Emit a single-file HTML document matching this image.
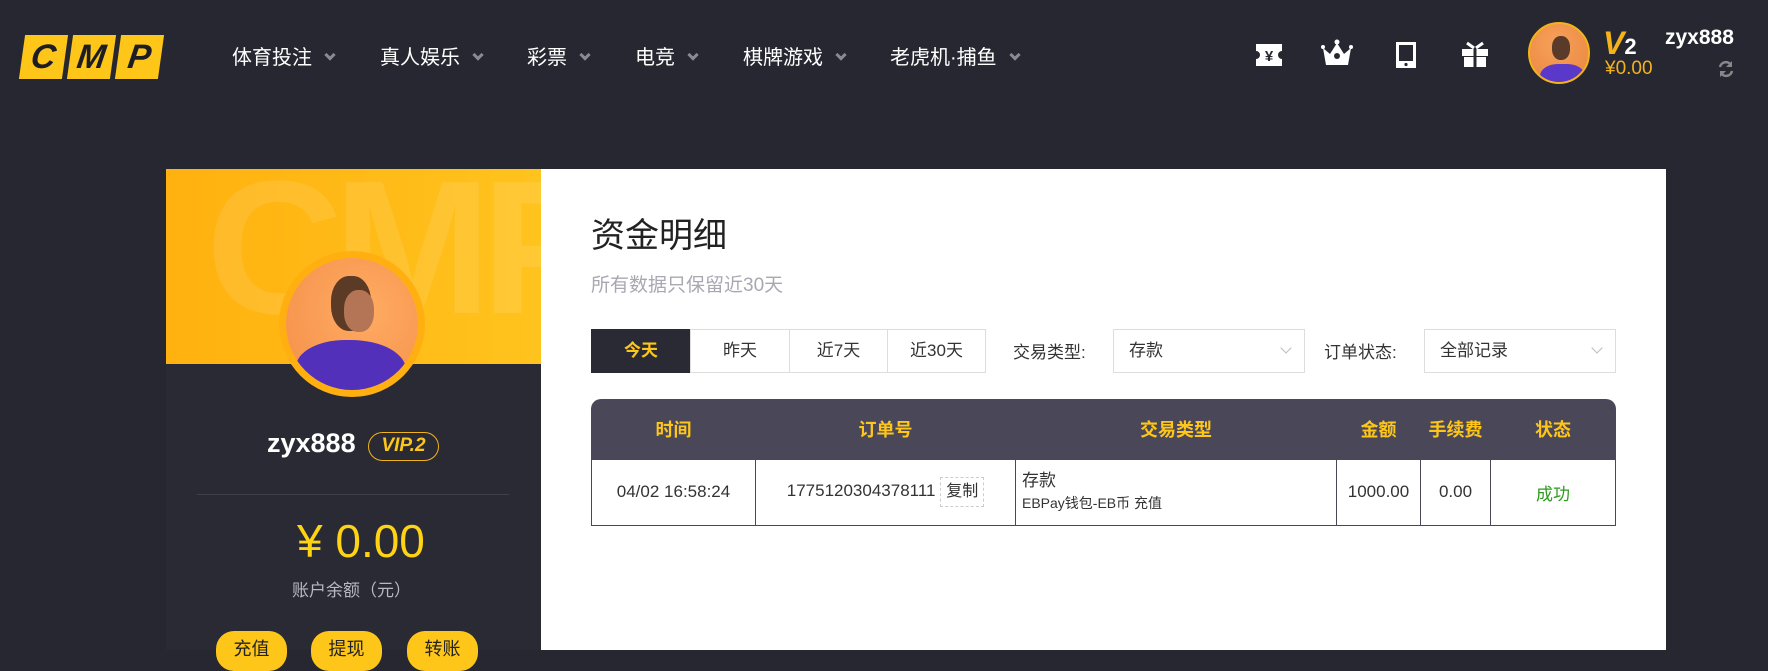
<!DOCTYPE html>
<html><head><meta charset="utf-8"><style>
*{margin:0;padding:0;box-sizing:border-box}
body{width:1768px;height:650px;overflow:hidden;background:#272731;font-family:"Liberation Sans","Noto Sans CJK SC",sans-serif;position:relative;color:#222}
.abs{position:absolute}
.nav{color:#fff;font-size:20px;top:41px;white-space:nowrap}
.nav i{display:inline-block;width:8px;height:8px;border-right:3px solid #8a8a94;border-bottom:3px solid #8a8a94;transform:rotate(45deg);margin-left:14px;vertical-align:5px}
.logo{top:35px;left:22px;display:flex;gap:5px}
.logo span{display:block;width:43px;height:44px;background:#fec619;transform:skewX(-8deg);font:italic 900 34px "Liberation Sans",sans-serif;color:#1d1d24;text-align:center;line-height:44px}
.tab{top:329px;height:44px;border:1px solid #ddd;text-align:center;line-height:42px;font-size:17px;color:#333;background:#fff}
.sel{top:329px;height:44px;border:1px solid #ddd;font-size:17px;line-height:42px;padding-left:15px;color:#333}
.sel:after{content:"";position:absolute;right:14px;top:14px;width:7px;height:7px;border-right:1px solid #bbb;border-bottom:1px solid #bbb;transform:rotate(45deg)}
table{border-collapse:collapse;position:absolute;left:591px;top:399px;width:1025px;table-layout:fixed}
th{background:#4a4858;color:#fec619;font-size:18px;height:60px;font-weight:bold}
td{border:1px solid #4a4858;height:66px;text-align:center;font-size:17px;color:#333}
.btn{top:631px;width:71px;height:40px;border-radius:18px;background:#fec619;font-size:18px;text-align:center;line-height:36px;color:#222}
</style></head><body>
<div class="abs logo"><span>C</span><span>M</span><span>P</span></div>
<div class="abs nav" style="left:232px">体育投注<i></i></div>
<div class="abs nav" style="left:380px">真人娱乐<i></i></div>
<div class="abs nav" style="left:527px">彩票<i></i></div>
<div class="abs nav" style="left:635px">电竞<i></i></div>
<div class="abs nav" style="left:743px">棋牌游戏<i></i></div>
<div class="abs nav" style="left:890px">老虎机·捕鱼<i></i></div>
<svg class="abs" style="left:1254px;top:42px" width="30" height="26" viewBox="0 0 30 26"><path d="M2 2h26v7a4 4 0 0 0 0 8v7H2v-7a4 4 0 0 0 0-8z" fill="#fff"/><text x="15" y="19" font-size="15" font-weight="bold" text-anchor="middle" fill="#272731" font-family="Liberation Sans">¥</text></svg>
<svg class="abs" style="left:1321px;top:38px" width="32" height="30" viewBox="0 0 32 30"><path d="M2 10l7 6 7-11 7 11 7-6-3 17H5z" fill="#fff"/><circle cx="16" cy="4" r="2.5" fill="#fff"/><circle cx="2" cy="9" r="2" fill="#fff"/><circle cx="30" cy="9" r="2" fill="#fff"/><circle cx="16" cy="18" r="3" fill="#272731"/></svg>
<svg class="abs" style="left:1395px;top:41px" width="22" height="28" viewBox="0 0 22 28"><rect x="1" y="1" width="20" height="26" fill="#fff"/><rect x="4" y="4" width="14" height="16" fill="#272731"/><circle cx="11" cy="23.5" r="1.6" fill="#272731"/></svg>
<svg class="abs" style="left:1460px;top:40px" width="30" height="28" viewBox="0 0 30 28"><rect x="2" y="9" width="26" height="7" fill="#fff"/><rect x="4" y="17" width="22" height="10" fill="#fff"/><rect x="13.5" y="9" width="3" height="18" fill="#272731"/><path d="M7 3l7 5M23 3l-7 5" stroke="#fff" stroke-width="3"/></svg>
<div class="abs" style="left:1528px;top:22px;width:62px;height:62px;border-radius:50%;border:2px solid #f5b31a;background:radial-gradient(circle at 45% 35%,#f7a15a,#e8853e);overflow:hidden"><div style="position:absolute;left:10px;top:40px;width:45px;height:30px;background:#5a38c9;border-radius:40% 40% 0 0"></div><div style="position:absolute;left:22px;top:12px;width:18px;height:24px;background:#5a3a28;border-radius:45%"></div></div>
<div class="abs" style="left:1603px;top:25px;font:italic bold 32px 'Liberation Sans';color:#f5b31a">V<span style="color:#fff;font-size:22px;font-style:normal">2</span></div>
<div class="abs" style="left:1605px;top:58px;font-size:19px;color:#f5b31a">¥0.00</div>
<div class="abs" style="left:1665px;top:26px;font-size:21px;font-weight:bold;color:#fff">zyx888</div>
<svg class="abs" style="left:1717px;top:59px" width="18" height="20" viewBox="0 0 18 20"><path d="M3 8a6 6 0 0 1 11-2M15 12a6 6 0 0 1-11 2" stroke="#888" stroke-width="2.5" fill="none"/><path d="M15 2v6h-6zM3 18v-6h6z" fill="#888"/></svg>
<div class="abs" style="left:166px;top:169px;width:375px;height:481px;background:#2a2a35"></div>
<div class="abs" style="left:166px;top:169px;width:375px;height:195px;background:linear-gradient(90deg,#ffb10f,#ffc31e);overflow:hidden"><div style="position:absolute;left:40px;top:-30px;font:bold 190px 'Liberation Sans';color:rgba(255,255,255,.1);letter-spacing:-10px">CMP</div></div>
<div class="abs" style="left:279px;top:251px;width:146px;height:146px;border-radius:50%;background:#ffb010;padding:7px"><div style="width:132px;height:132px;border-radius:50%;background:radial-gradient(circle at 60% 40%,#ffab62,#f48e48);overflow:hidden;position:relative"><div style="position:absolute;left:10px;top:82px;width:110px;height:60px;background:#5230b9;border-radius:45% 50% 0 0"></div><div style="position:absolute;left:45px;top:18px;width:40px;height:55px;background:#5b3a26;border-radius:45%"></div><div style="position:absolute;left:58px;top:32px;width:30px;height:42px;background:#b37555;border-radius:45%"></div></div></div>
<div class="abs" style="left:267px;top:428px;font-size:27px;font-weight:bold;color:#fff">zyx888</div>
<div class="abs" style="left:368px;top:432px;width:71px;height:29px;border:1.5px solid #f2b31a;border-radius:15px;color:#fec619;font:italic bold 19px 'Liberation Sans';text-align:center;line-height:26px">VIP.2</div>
<div class="abs" style="left:197px;top:494px;width:312px;height:1px;background:#40404c"></div>
<div class="abs" style="left:297px;top:514px;font-size:46px;color:#fed314">¥ 0.00</div>
<div class="abs" style="left:292px;top:576px;font-size:17px;color:#b8b8c2">账户余额（元）</div>
<div class="abs btn" style="left:216px">充值</div>
<div class="abs btn" style="left:311px">提现</div>
<div class="abs btn" style="left:407px">转账</div>
<div class="abs" style="left:541px;top:169px;width:1125px;height:481px;background:#fff"></div>
<div class="abs" style="left:591px;top:208px;font-size:34px;color:#222">资金明细</div>
<div class="abs" style="left:591px;top:270px;font-size:19px;color:#a8a8b2">所有数据只保留近30天</div>
<div class="abs tab" style="left:591px;width:100px;background:#2a2a35;border-color:#2a2a35;color:#fec619;font-weight:bold">今天</div>
<div class="abs tab" style="left:690px;width:100px">昨天</div>
<div class="abs tab" style="left:789px;width:99px">近7天</div>
<div class="abs tab" style="left:887px;width:99px">近30天</div>
<div class="abs" style="left:1013px;top:338px;font-size:17px;color:#333">交易类型:</div>
<div class="abs sel" style="left:1113px;width:192px">存款</div>
<div class="abs" style="left:1324px;top:338px;font-size:17px;color:#333">订单状态:</div>
<div class="abs sel" style="left:1424px;width:192px">全部记录</div>
<div class="abs" style="left:591px;top:399px;width:1025px;height:60px;background:#4a4858;border-radius:10px 10px 0 0"></div>
<table><colgroup><col style="width:164px"><col style="width:260px"><col style="width:321px"><col style="width:84px"><col style="width:70px"><col></colgroup>
<tr><th style="background:none">时间</th><th style="background:none">订单号</th><th style="background:none">交易类型</th><th style="background:none">金额</th><th style="background:none">手续费</th><th style="background:none">状态</th></tr>
<tr><td>04/02 16:58:24</td><td>1775120304378111 <span style="display:inline-block;border:1px dashed #ccc;padding:0 5px;font-size:16px;line-height:28px">复制</span></td><td style="text-align:left;padding-left:6px;line-height:1.3">存款<br><span style="font-size:14px">EBPay钱包-EB币 充值</span></td><td>1000.00</td><td>0.00</td><td style="color:#2e9a1e">成功</td></tr>
</table>
</body></html>
